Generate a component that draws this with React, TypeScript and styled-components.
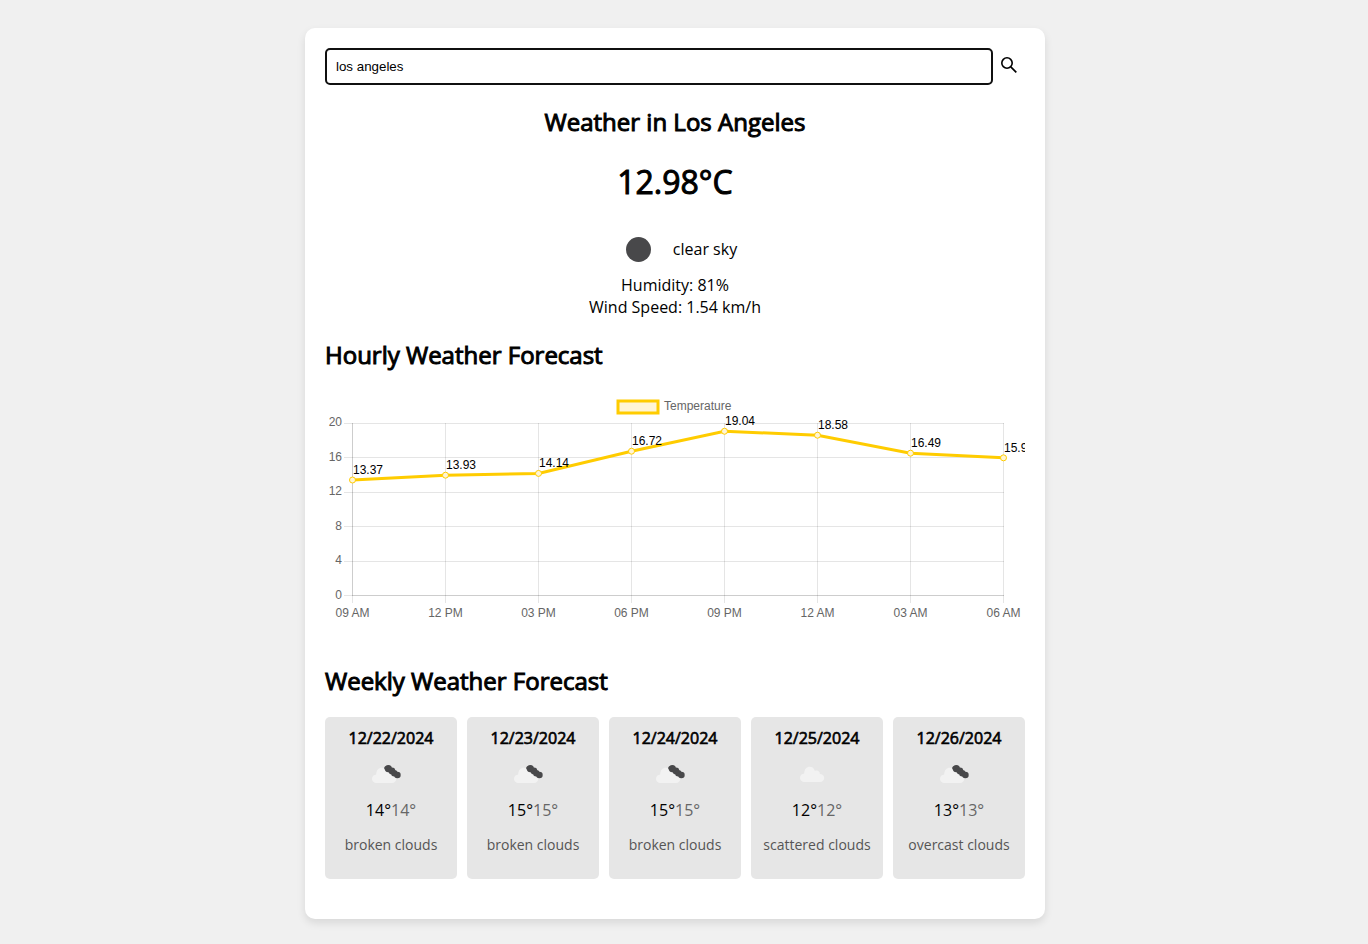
import React, { useState } from 'react';
import styled, { createGlobalStyle } from 'styled-components';

const GlobalStyle = createGlobalStyle`
  body {
    margin: 0;
    background: #f0f0f0;
    color: #000;
    font-family: 'Open Sans', sans-serif;
    font-size: 16px;
    line-height: 22px;
  }
`;

const Page = styled.main`
  padding: 28px 18px 25px 0;
`;

const Card = styled.div`
  box-sizing: border-box;
  max-width: 740px;
  margin: 0 auto;
  padding: 20px 20px 40px;
  background: #fff;
  border-radius: 10px;
  box-shadow: 0 4px 8px rgba(0, 0, 0, 0.1);
`;

const SearchBar = styled.form`
  display: flex;
  align-items: flex-start;
`;

const SearchInput = styled.input`
  box-sizing: border-box;
  flex: 1;
  min-width: 0;
  height: 37px;
  padding: 0 9px;
  border: 2px solid #101010;
  border-radius: 5px;
  outline: none;
  background: #fff;
  color: #000;
  font-family: 'Liberation Sans', Arial, sans-serif;
`;

const SearchButton = styled.button`
  display: flex;
  align-items: center;
  justify-content: center;
  width: 32px;
  height: 34px;
  padding: 0;
  border: 0;
  background: none;
  color: #000;
  cursor: pointer;
`;

const Heading = styled.h2<{ $centered?: boolean }>`
  margin: 20px 0;
  font-size: 24px;
  line-height: 33px;
  font-weight: 400;
  -webkit-text-stroke: 1px currentColor;
  text-align: ${({ $centered }) => ($centered ? 'center' : 'left')};
`;

const Current = styled.section`
  text-align: center;
`;

const Temperature = styled.h1`
  margin: 22px 0 20px;
  font-size: 32px;
  line-height: 44px;
  font-weight: 400;
  -webkit-text-stroke: 1px currentColor;
`;

const Condition = styled.div`
  display: flex;
  align-items: center;
  justify-content: center;
  gap: 10px;
`;

const Detail = styled.p`
  margin: 0;
`;

const ChartSvg = styled.svg`
  display: block;
  width: 100%;
  height: auto;
  overflow: hidden;
  font-family: 'Liberation Sans', Arial, sans-serif;
  font-size: 12px;
`;

const Days = styled.ul`
  display: grid;
  grid-template-columns: repeat(5, 1fr);
  gap: 10px;
  margin: 0;
  padding: 0;
  list-style: none;
`;

const Day = styled.li`
  display: flex;
  flex-direction: column;
  align-items: center;
  padding: 10px 0;
  border-radius: 5px;
  background: #e6e6e6;
  text-align: center;
`;

const DayDate = styled.time`
  -webkit-text-stroke: 0.04em currentColor;
`;

const Low = styled.span`
  color: #666;
`;

const DayText = styled.p`
  margin: 14px 0;
  color: #555;
  font-size: 14px;
  line-height: 20px;
`;

function SearchIcon() {
  return (
    <svg width="22" height="22" viewBox="0 0 22 22" fill="none" stroke="currentColor" aria-hidden="true">
      <circle cx="9" cy="9" r="5.2" strokeWidth="1.6" />
      <path d="M12.8 12.8L18.3 18.3" strokeWidth="1.7" />
    </svg>
  );
}

const cloudPath =
  'M4.6 15.3C2 15.3 0 13.3 0 11C0 8.8 1.8 7 4.2 6.8C4.2 2.7 6.6 0 9.8 0C12.3 0 14.2 1.6 14.9 4.2C17.3 3.2 20 4.8 19.9 7.4C22.3 7.4 24.2 9.1 24.2 11.3C24.2 13.5 22.4 15.3 20.1 15.3Z';

type IconKind = 'clear' | 'broken' | 'scattered';

function WeatherIcon({ kind, label }: { kind: IconKind; label: string }) {
  return (
    <svg width="50" height="50" viewBox="0 0 50 50" role="img" aria-label={label}>
      {kind === 'clear' && <circle cx="25.5" cy="25.5" r="12.5" fill="#48484a" />}
      {kind === 'broken' && (
        <>
          <path d={cloudPath} transform="translate(6 18.7)" fill="#f2f2f2" />
          <g fill="#48484a">
            <circle cx="22.3" cy="19.6" r="3.6" />
            <circle cx="19.9" cy="18.9" r="1.7" />
            <circle cx="25.9" cy="21.9" r="3.4" />
            <circle cx="28.3" cy="24.2" r="3.2" />
            <circle cx="31.4" cy="26" r="3.3" />
          </g>
        </>
      )}
      {kind === 'scattered' && (
        <path d={cloudPath} transform="translate(8 17.7)" fill="#f2f2f2" />
      )}
    </svg>
  );
}

const hourly = [
  { time: '09 AM', value: 13.37 },
  { time: '12 PM', value: 13.93 },
  { time: '03 PM', value: 14.14 },
  { time: '06 PM', value: 16.72 },
  { time: '09 PM', value: 19.04 },
  { time: '12 AM', value: 18.58 },
  { time: '03 AM', value: 16.49 },
  { time: '06 AM', value: 15.95 },
];

const ticks = [0, 4, 8, 12, 16, 20];
const left = 27.5;
const right = 678.5;
const top = 32;
const bottom = 204;
const xAt = (i: number) => left + i * 93;
const yAt = (v: number) => bottom - (v / 20) * (bottom - top);

function HourlyChart() {
  return (
    <ChartSvg viewBox="0 0 700 253" role="img" aria-label="Hourly temperature">
      <g stroke="#000" strokeOpacity="0.1">
        {ticks.map((v) => {
          const y = Math.floor(yAt(v) + 0.5) + 0.5;
          return <line key={v} x1="19" x2={right + 0.5} y1={y} y2={y} />;
        })}
        {hourly.map((h, i) => (
          <line key={h.time} x1={xAt(i)} x2={xAt(i)} y1="32" y2="212" />
        ))}
        <line x1={left} x2={left} y1="32" y2="205" />
        <line x1={left} x2={right + 0.5} y1={bottom + 0.5} y2={bottom + 0.5} />
      </g>
      <g fill="#666" textAnchor="end">
        {ticks.map((v) => (
          <text key={v} x="17" y={Math.round(35 + ((20 - v) / 20) * 173)}>
            {v}
          </text>
        ))}
      </g>
      <g fill="#666" textAnchor="middle">
        {hourly.map((h, i) => (
          <text key={h.time} x={xAt(i)} y="226">
            {h.time}
          </text>
        ))}
      </g>
      <rect x="293" y="10" width="40" height="12" fill="#fff5d6" stroke="#fc0" strokeWidth="3" />
      <text x="339" y="19" fill="#666">
        Temperature
      </text>
      <polyline
        points={hourly.map((h, i) => `${xAt(i)},${yAt(h.value)}`).join(' ')}
        fill="none"
        stroke="#fc0"
        strokeWidth="3"
      />
      {hourly.map((h, i) => (
        <circle key={h.time} cx={xAt(i)} cy={yAt(h.value)} r="3" fill="#fff5d6" stroke="#fc0" />
      ))}
      {hourly.map((h, i) => (
        <text key={h.time} x={xAt(i) + 0.5} y={Math.round(yAt(h.value) - 6)} fill="#000">
          {h.value.toFixed(2)}
        </text>
      ))}
    </ChartSvg>
  );
}

const weekly: { date: string; temp: number; text: string; icon: IconKind }[] = [
  { date: '12/22/2024', temp: 14, text: 'broken clouds', icon: 'broken' },
  { date: '12/23/2024', temp: 15, text: 'broken clouds', icon: 'broken' },
  { date: '12/24/2024', temp: 15, text: 'broken clouds', icon: 'broken' },
  { date: '12/25/2024', temp: 12, text: 'scattered clouds', icon: 'scattered' },
  { date: '12/26/2024', temp: 13, text: 'overcast clouds', icon: 'broken' },
];

export default function App() {
  const [city, setCity] = useState('los angeles');
  return (
    <>
      <GlobalStyle />
      <Page>
        <Card>
          <SearchBar onSubmit={(e) => e.preventDefault()}>
            <SearchInput
              type="text"
              aria-label="City"
              value={city}
              onChange={(e) => setCity(e.target.value)}
            />
            <SearchButton type="submit" aria-label="Search">
              <SearchIcon />
            </SearchButton>
          </SearchBar>
          <Current>
            <Heading $centered>Weather in Los Angeles</Heading>
            <Temperature>12.98°C</Temperature>
            <Condition>
              <WeatherIcon kind="clear" label="Clear night" />
              <span>clear sky</span>
            </Condition>
            <Detail>Humidity: 81%</Detail>
            <Detail>Wind Speed: 1.54 km/h</Detail>
          </Current>
          <section>
            <Heading>Hourly Weather Forecast</Heading>
            <HourlyChart />
          </section>
          <section>
            <Heading>Weekly Weather Forecast</Heading>
            <Days>
              {weekly.map((d) => (
                <Day key={d.date}>
                  <DayDate>{d.date}</DayDate>
                  <WeatherIcon kind={d.icon} label={d.text} />
                  <div>
                    {d.temp}°<Low>{d.temp}°</Low>
                  </div>
                  <DayText>{d.text}</DayText>
                </Day>
              ))}
            </Days>
          </section>
        </Card>
      </Page>
    </>
  );
}
